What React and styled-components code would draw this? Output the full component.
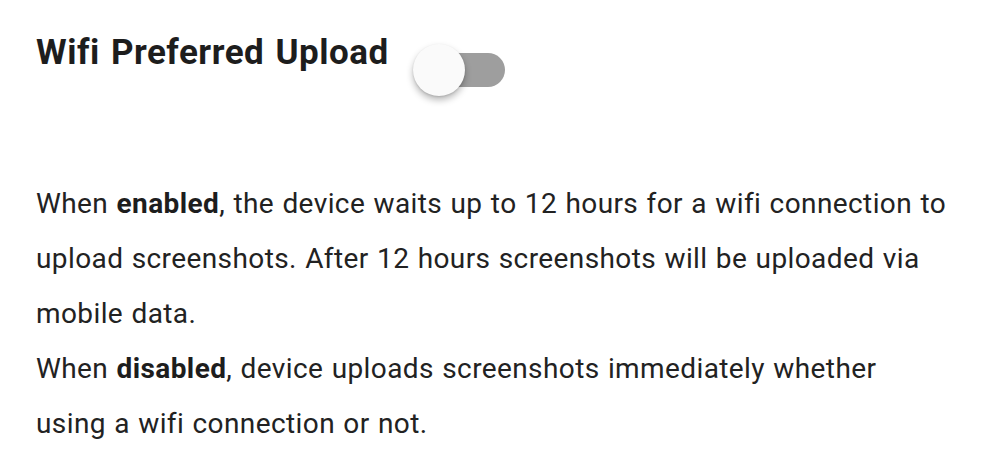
import styled, { createGlobalStyle } from "styled-components";

const GlobalStyle = createGlobalStyle`
  html, body {
    margin: 0;
    padding: 0;
    background: #ffffff;
  }
  body {
    font-family: Roboto, "Noto Sans", sans-serif;
    color: #212121;
  }
`;

const App = () => {
  return (
    <Page>
      <GlobalStyle />
      <Header>
        <Title>Wifi Preferred Upload</Title>
        <Switch role="switch" aria-checked="false">
          <Track />
          <Thumb />
        </Switch>
      </Header>
      <Description>
        <Paragraph>
          When <b>enabled</b>, the device waits up to 12 hours for a wifi
          connection to upload screenshots. After 12 hours screenshots will be
          uploaded via mobile data.
        </Paragraph>
        <Paragraph>
          When <b>disabled</b>, device uploads screenshots immediately whether
          using a wifi connection or not.
        </Paragraph>
      </Description>
    </Page>
  );
};

const Page = styled.div`
  width: 985px;
  height: 473px;
  padding: 33px 36px 0;
  box-sizing: border-box;
  overflow: hidden;
`;

const Header = styled.div`
  display: flex;
  align-items: flex-start;
`;

const Title = styled.h1`
  margin: 0;
  font-size: 35px;
  line-height: 40px;
  font-weight: 700;
  letter-spacing: 0.5px;
  word-spacing: 2px;
  color: #1d1d1d;
`;

const Switch = styled.div`
  position: relative;
  width: 92px;
  height: 52px;
  margin: 11px 0 0 24px;
  cursor: pointer;
`;

const Track = styled.div`
  position: absolute;
  left: 2px;
  top: 9px;
  width: 90px;
  height: 34px;
  border-radius: 17px;
  background: #9e9e9e;
`;

const Thumb = styled.div`
  position: absolute;
  left: 0;
  top: 0;
  width: 52px;
  height: 52px;
  border-radius: 50%;
  background: #fafafa;
  box-shadow: 0 4px 7px rgba(0, 0, 0, 0.28), 0 1px 2px rgba(0, 0, 0, 0.12);
`;

const Description = styled.div`
  margin-top: 80px;
  width: 918px;
`;

const Paragraph = styled.p`
  margin: 0;
  font-size: 28px;
  line-height: 55px;
  letter-spacing: 0.4px;
  word-spacing: 1px;
  color: #222222;

  b {
    font-weight: 700;
    color: #1d1d1d;
  }
`;

export default App;
